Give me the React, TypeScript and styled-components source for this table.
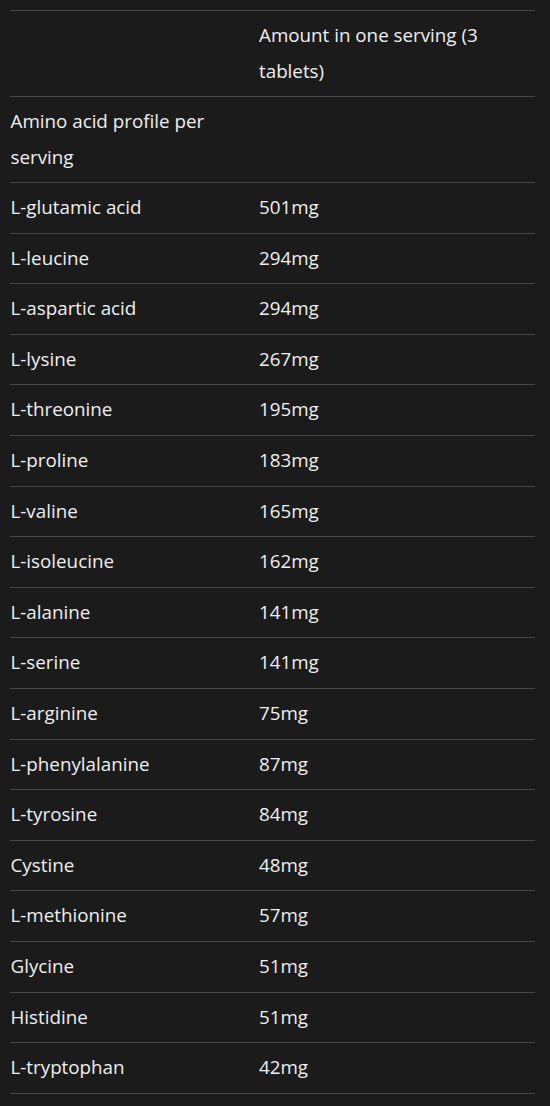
import React from "react"
import styled, { createGlobalStyle } from "styled-components"

const GlobalStyle = createGlobalStyle`
  html, body {
    margin: 0;
    padding: 0;
    background: #1b1b1b;
  }
  body {
    font-family: "Open Sans", "Noto Sans", sans-serif;
    color: #efefef;
  }
`

interface Amino {
  name: string
  amount: string
}

const aminos: Amino[] = [
  { name: "L-glutamic acid", amount: "501mg" },
  { name: "L-leucine", amount: "294mg" },
  { name: "L-aspartic acid", amount: "294mg" },
  { name: "L-lysine", amount: "267mg" },
  { name: "L-threonine", amount: "195mg" },
  { name: "L-proline", amount: "183mg" },
  { name: "L-valine", amount: "165mg" },
  { name: "L-isoleucine", amount: "162mg" },
  { name: "L-alanine", amount: "141mg" },
  { name: "L-serine", amount: "141mg" },
  { name: "L-arginine", amount: "75mg" },
  { name: "L-phenylalanine", amount: "87mg" },
  { name: "L-tyrosine", amount: "84mg" },
  { name: "Cystine", amount: "48mg" },
  { name: "L-methionine", amount: "57mg" },
  { name: "Glycine", amount: "51mg" },
  { name: "Histidine", amount: "51mg" },
  { name: "L-tryptophan", amount: "42mg" },
]

const App: React.FC = () => {
  return (
    <S.Page>
      <GlobalStyle />
      <S.Table>
        <S.Row>
          <S.Cell />
          <S.Cell>Amount in one serving (3 tablets)</S.Cell>
        </S.Row>
        <S.Row>
          <S.Cell>Amino acid profile per serving</S.Cell>
          <S.Cell />
        </S.Row>
        {aminos.map((item, i) => (
          <S.Row key={item.name} $last={i === aminos.length - 1}>
            <S.Cell>{item.name}</S.Cell>
            <S.Cell>{item.amount}</S.Cell>
          </S.Row>
        ))}
      </S.Table>
    </S.Page>
  )
}

const S = {
  Page: styled.div`
    min-height: 1106px;
    box-sizing: border-box;
    padding: 10px 15px 0 10px;
    background: #1b1b1b;
  `,
  Table: styled.div`
    width: 525px;
    display: flex;
    flex-direction: column;
  `,
  Row: styled.div<{ $last?: boolean }>`
    display: grid;
    grid-template-columns: 248.5px 1fr;
    border-top: 1px solid #454545;
    border-bottom: ${(p) => (p.$last ? "1px solid #454545" : "none")};
  `,
  Cell: styled.div`
    padding: 7.1px 12px 7.1px 0.5px;
    font-size: 18.8px;
    font-weight: 500;
    line-height: 35.4px;
  `,
}

export default App
